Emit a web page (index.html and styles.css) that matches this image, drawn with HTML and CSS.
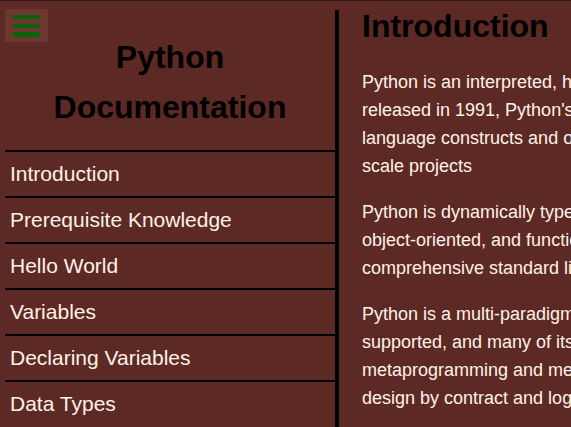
FILE: index.html
```html
<!DOCTYPE html>
<html lang="en">
<head>
<meta charset="utf-8">
<meta name="viewport" content="width=device-width, initial-scale=1">
<title>Python Documentation</title>
<link rel="stylesheet" href="styles.css">
</head>
<body>
<div class="page">
  <nav class="sidebar" aria-label="Documentation sections">
    <button class="menu" type="button" aria-label="Toggle menu">
      <svg class="menu-icon" viewBox="0 0 27 22" aria-hidden="true">
        <rect y="0" width="27" height="4" rx="1"/>
        <rect y="9" width="27" height="4" rx="1"/>
        <rect y="17" width="27" height="5" rx="1"/>
      </svg>
    </button>
    <h1 class="brand">Python Documentation</h1>
    <ul class="links">
      <li><a href="#introduction">Introduction</a></li>
      <li><a href="#prerequisites">Prerequisite Knowledge</a></li>
      <li><a href="#hello">Hello World</a></li>
      <li><a href="#variables">Variables</a></li>
      <li><a href="#declaring">Declaring Variables</a></li>
      <li><a href="#types">Data Types</a></li>
    </ul>
  </nav>
  <main class="content">
    <section id="introduction">
      <h2>Introduction</h2>
      <p>Python is an interpreted, high-level<br>
        released in 1991, Python's<br>
        language constructs and object<br>
        scale projects</p>
      <p>Python is dynamically typed<br>
        object-oriented, and functional<br>
        comprehensive standard library</p>
      <p>Python is a multi-paradigm<br>
        supported, and many of its<br>
        metaprogramming and metaobjects<br>
        design by contract and logic</p>
    </section>
  </main>
</div>
</body>
</html>
```
FILE: styles.css
```css
* {
  box-sizing: border-box;
}

body {
  margin: 0;
  background: #5d2925;
  color: #fff2e6;
  font-family: "Liberation Sans", Arial, sans-serif;
  overflow: hidden;
}

.page {
  display: flex;
  min-height: 100vh;
  padding: 9px 0 0 5px;
  border-top: 1px solid #301919;
}

.sidebar {
  position: relative;
  flex: 0 0 334px;
  border-right: 4px solid #000;
}

.menu {
  position: absolute;
  top: -1px;
  left: 0;
  display: flex;
  padding: 6px 8px 5px;
  border: 0;
  background: #6c3731;
  cursor: pointer;
}

.menu-icon {
  width: 27px;
  height: 22px;
  fill: #096409;
}

.brand {
  margin: 0;
  padding: 22px 32px 18px;
  color: #000;
  font-size: 32px;
  line-height: 50px;
  text-align: center;
}

.links {
  margin: 0;
  padding: 0;
  list-style: none;
}

.links li {
  border-top: 2px solid #000;
}

.links a {
  display: block;
  padding-left: 5px;
  color: inherit;
  font-size: 21px;
  line-height: 44px;
  text-decoration: none;
}

.content {
  flex: 1;
  min-width: 0;
  padding-left: 23px;
  overflow: hidden;
  white-space: nowrap;
}

.content h2 {
  margin: 0 0 26px;
  color: #000;
  font-size: 32px;
  line-height: 32px;
}

.content p {
  margin: 0 0 18px;
  font-size: 18px;
  line-height: 28px;
}

.content p:last-child {
  margin-bottom: 0;
}
```
